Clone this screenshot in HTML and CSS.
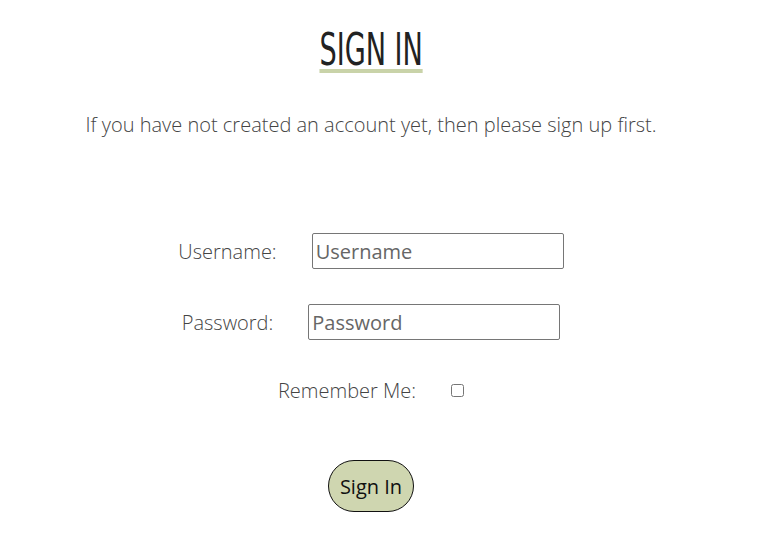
FILE: index.html
```html
<!DOCTYPE html>
<html lang="en">
<head>
<meta charset="utf-8">
<title>Sign In</title>
<link rel="stylesheet" href="styles.css">
</head>
<body>
<main class="page">
  <h1 class="title">SIGN IN</h1>
  <p class="intro">If you have not created an account yet, then please sign up first.</p>
  <form class="login-form">
    <div class="row">
      <label class="label" for="id_login">Username:</label>
      <input class="field" id="id_login" type="text" placeholder="Username">
    </div>
    <div class="row">
      <label class="label" for="id_password">Password:</label>
      <input class="field" id="id_password" type="password" placeholder="Password">
    </div>
    <div class="row row-check">
      <label class="label" for="id_remember">Remember Me:</label>
      <input class="check" id="id_remember" type="checkbox">
    </div>
    <div class="actions">
      <button class="btn" type="submit">Sign In</button>
    </div>
  </form>
</main>
</body>
</html>
```
FILE: styles.css
```css
html, body {
  margin: 0;
  padding: 0;
  background: #fff;
}

.page {
  width: 742px;
  text-align: center;
  font-family: "Open Sans", sans-serif;
  padding-top: 31px;
}

.title {
  display: inline-block;
  margin: 0;
  font-family: "Liberation Sans Narrow", "DejaVu Sans Condensed", sans-serif;
  font-weight: 400;
  font-size: 45px;
  line-height: 38px;
  color: #222;
  border-bottom: 4px solid #c9d3a9;
  transform: scaleX(0.67);
}

.intro {
  margin: 37px 0 0;
  font-size: 20px;
  font-weight: 300;
  line-height: 30px;
  color: #444;
}

.login-form {
  margin-top: 93px;
}

.row {
  display: flex;
  justify-content: center;
  align-items: center;
  gap: 35px;
  height: 36px;
  margin-bottom: 35px;
}

.row-check {
  height: 30px;
  margin-bottom: 55px;
}

.label {
  font-size: 20px;
  font-weight: 300;
  color: #444;
}

.field {
  box-sizing: border-box;
  width: 252px;
  height: 36px;
  margin: 0;
  padding: 0 3px;
  border: 1px solid #767676;
  border-radius: 2px;
  font-family: "Open Sans", sans-serif;
  font-weight: 400;
  font-size: 20px;
  color: #333;
}

.field::placeholder {
  color: #666;
}

.check {
  width: 13px;
  height: 13px;
  margin: 0;
}

.actions {
  display: flex;
  justify-content: center;
}

.btn {
  box-sizing: border-box;
  width: 86px;
  height: 52px;
  padding: 0;
  border: 1px solid #111;
  border-radius: 26px;
  background: #cfd6b0;
  font-family: "Open Sans", sans-serif;
  font-weight: 400;
  font-size: 20px;
  color: #111;
}
```
